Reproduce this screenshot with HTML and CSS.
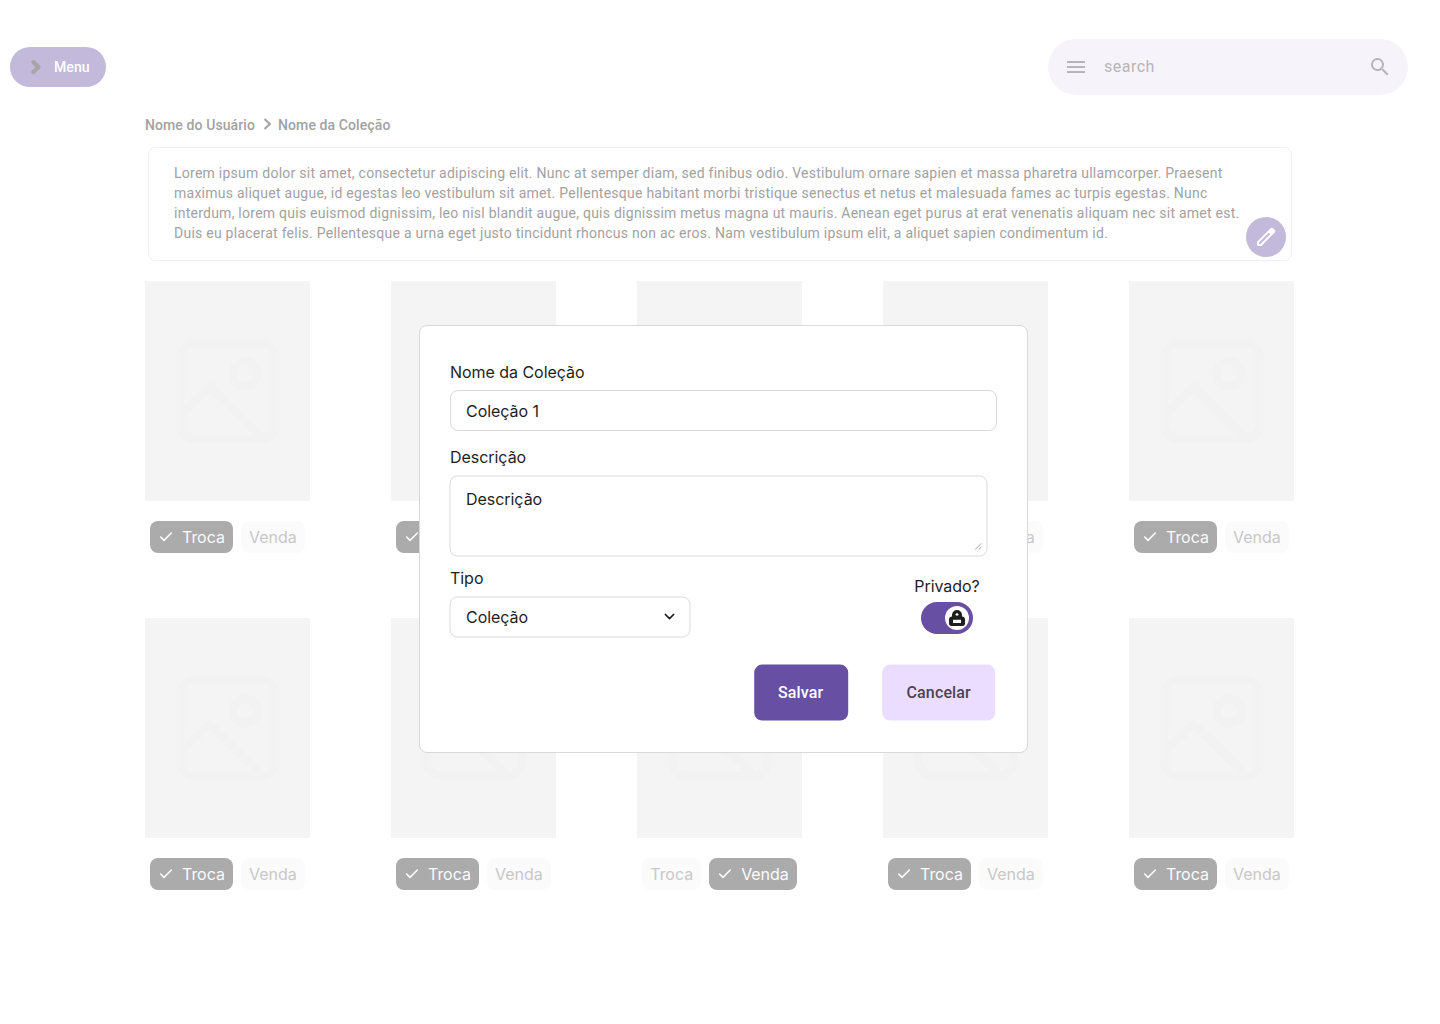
FILE: index.html
```html
<!DOCTYPE html>
<html lang="pt-BR">
<head>
<meta charset="utf-8">
<title>Coleção</title>
<link rel="stylesheet" href="styles.css">
</head>
<body>
<svg class="defs" width="0" height="0" aria-hidden="true">
  <symbol id="check" viewBox="0 0 16 16"><path d="M13.33 4 6 11.33 2.67 8" fill="none" stroke="currentColor" stroke-width="1.6" stroke-linecap="round" stroke-linejoin="round"/></symbol>
  <symbol id="image" viewBox="0 0 104 104"><g fill="none" stroke="#f2f2f2" stroke-width="8.5"><rect x="4.5" y="4.5" width="95" height="95" rx="14"/><circle cx="69" cy="35" r="12.5"/><path d="M5 75 34 48 84 97" stroke-linejoin="round"/></g></symbol>
</svg>
<header class="header">
  <button class="menu"><svg width="12" height="16" viewBox="0 0 12 16"><path d="M3.3 3 8.5 8 3.3 13" fill="none" stroke="#a5a5a5" stroke-width="4" stroke-linecap="round" stroke-linejoin="round"/></svg><span>Menu</span></button>
  <div class="search">
    <svg width="24" height="24" viewBox="0 0 24 24"><path d="M3 18h18v-2H3v2zm0-5h18v-2H3v2zm0-7v2h18V6H3z" fill="#b6b5ba"/></svg>
    <span class="search-text">search</span>
    <svg width="24" height="24" viewBox="0 0 24 24"><path d="M15.5 14h-.79l-.28-.27A6.47 6.47 0 0 0 16 9.5 6.5 6.5 0 1 0 9.5 16c1.61 0 3.09-.59 4.23-1.57l.27.28v.79l5 4.99L20.49 19l-4.99-5zm-6 0a4.5 4.5 0 1 1 0-9 4.5 4.5 0 0 1 0 9z" fill="#b6b5ba"/></svg>
  </div>
</header>
<main class="content">
  <nav class="crumbs"><span>Nome do Usuário</span><svg width="9" height="14" viewBox="0 0 9 14"><path d="M1.5 2 6.8 7 1.5 12" fill="none" stroke="#a5a5a5" stroke-width="2.2"/></svg><span>Nome da Coleção</span></nav>
  <section class="about">
    <p>Lorem ipsum dolor sit amet, consectetur adipiscing elit. Nunc at semper diam, sed finibus odio. Vestibulum ornare sapien et massa pharetra ullamcorper. Praesent<br>maximus aliquet augue, id egestas leo vestibulum sit amet. Pellentesque habitant morbi tristique senectus et netus et malesuada fames ac turpis egestas. Nunc<br>interdum, lorem quis euismod dignissim, leo nisl blandit augue, quis dignissim metus magna ut mauris. Aenean eget purus at erat venenatis aliquam nec sit amet est.<br>Duis eu placerat felis. Pellentesque a urna eget justo tincidunt rhoncus non ac eros. Nam vestibulum ipsum elit, a aliquet sapien condimentum id.</p>
    <button class="edit" aria-label="Editar"><svg width="24" height="24" viewBox="0 0 24 24"><path fill-rule="evenodd" d="M3 21v-4.3L16.3 3.4a2 2 0 0 1 2.9 0l1.4 1.4a2 2 0 0 1 0 2.9L7.3 21H3Zm2-2h1.4L16.2 9.2l-1.4-1.4L5 17.6V19Z" fill="#fff"/></svg></button>
  </section>
  <section class="grid">
    <article class="card"><div class="thumb"><svg><use href="#image"/></svg></div><div class="chips"><span class="chip on"><svg><use href="#check"/></svg>Troca</span><span class="chip">Venda</span></div></article>
    <article class="card"><div class="thumb"><svg><use href="#image"/></svg></div><div class="chips"><span class="chip on"><svg><use href="#check"/></svg>Troca</span><span class="chip">Venda</span></div></article>
    <article class="card"><div class="thumb"><svg><use href="#image"/></svg></div><div class="chips"><span class="chip on"><svg><use href="#check"/></svg>Troca</span><span class="chip">Venda</span></div></article>
    <article class="card"><div class="thumb"><svg><use href="#image"/></svg></div><div class="chips"><span class="chip on"><svg><use href="#check"/></svg>Troca</span><span class="chip">Venda</span></div></article>
    <article class="card"><div class="thumb"><svg><use href="#image"/></svg></div><div class="chips"><span class="chip on"><svg><use href="#check"/></svg>Troca</span><span class="chip">Venda</span></div></article>
    <article class="card"><div class="thumb"><svg><use href="#image"/></svg></div><div class="chips"><span class="chip on"><svg><use href="#check"/></svg>Troca</span><span class="chip">Venda</span></div></article>
    <article class="card"><div class="thumb"><svg><use href="#image"/></svg></div><div class="chips"><span class="chip on"><svg><use href="#check"/></svg>Troca</span><span class="chip">Venda</span></div></article>
    <article class="card"><div class="thumb"><svg><use href="#image"/></svg></div><div class="chips"><span class="chip">Troca</span><span class="chip on"><svg><use href="#check"/></svg>Venda</span></div></article>
    <article class="card"><div class="thumb"><svg><use href="#image"/></svg></div><div class="chips"><span class="chip on"><svg><use href="#check"/></svg>Troca</span><span class="chip">Venda</span></div></article>
    <article class="card"><div class="thumb"><svg><use href="#image"/></svg></div><div class="chips"><span class="chip on"><svg><use href="#check"/></svg>Troca</span><span class="chip">Venda</span></div></article>
  </section>
</main>
<form class="modal">
  <label class="label">Nome da Coleção</label>
  <div class="field name">Coleção 1</div>
  <label class="label desc-label">Descrição</label>
  <div class="field soft area">Descrição<svg class="grip" width="8" height="8" viewBox="0 0 8 8"><path d="M.5 7.2 6.8.8M4.2 7.2 6.8 4.6" fill="none" stroke="#a0a0a0"/></svg></div>
  <div class="row">
    <div class="type">
      <label class="label">Tipo</label>
      <div class="field soft select"><span>Coleção</span><svg width="16" height="16" viewBox="0 0 16 16"><path d="M3.8 5.9 8 10.1l4.2-4.2" fill="none" stroke="#1e1e1e" stroke-width="1.5" stroke-linecap="round" stroke-linejoin="round"/></svg></div>
    </div>
    <div class="private">
      <label class="label">Privado?</label>
      <div class="switch"><div class="knob"><svg width="16" height="16" viewBox="0 0 16 16"><path fill-rule="evenodd" d="M3 6.6V4.9A4.9 4.9 0 0 1 7.9 0h.2A4.9 4.9 0 0 1 13 4.9v1.7c1.8.2 3 1 3 2.8v4.1c0 1.6-.9 2.5-2.5 2.5h-11C.9 16 0 15.1 0 13.5V9.4c0-1.8 1.2-2.6 3-2.8ZM8 3.2c-.8 0-1.3.6-1.5 1.4-.1.7.4 1.2 1.5 1.2s1.6-.5 1.5-1.2C9.3 3.8 8.8 3.2 8 3.2ZM4 9.700v3.300h8V9.700H4Z" fill="#1e1e1e"/></svg></div></div>
    </div>
  </div>
  <div class="actions"><button type="button" class="btn primary">Salvar</button><button type="button" class="btn secondary">Cancelar</button></div>
</form>
</body>
</html>
```
FILE: styles.css
```css
* { box-sizing: border-box; }
body { margin: 0; width: 1440px; height: 1024px; overflow: hidden; position: relative; background: #fff; font-family: Inter, sans-serif; letter-spacing: -.04px; color: #1e1e1e; }
.defs { position: absolute; }
svg { display: block; flex: none; }
button { border: 0; margin: 0; font-family: Roboto, sans-serif; }
.header { display: flex; justify-content: space-between; align-items: center; height: 56px; margin: 39px 32px 0 10px; }
.menu { display: flex; align-items: center; gap: 12px; width: 96px; height: 40px; padding: 0 0 0 20px; border-radius: 20px; background: #c2b9db; color: #fff; font-size: 14px; font-weight: 500; letter-spacing: .1px; }
.search { display: flex; align-items: center; width: 360px; height: 56px; padding: 0 16px; border-radius: 28px; background: #f6f4fa; }
.search-text { flex: 1; margin-left: 16px; font: 400 16px/24px Roboto, sans-serif; letter-spacing: .5px; color: #b6b5ba; }
.content { margin: 20px 146px 0 145px; }
.crumbs { display: flex; align-items: center; height: 20px; font: 500 14px/20px Roboto, sans-serif; letter-spacing: .1px; color: #a2a2a2; }
.crumbs svg { margin: -3px 6px 0 8px; }
.about { position: relative; margin: 12px 2px 0 3px; height: 114px; padding: 15px 25px; border: 1px solid #f0f0f0; border-radius: 8px; }
.about p { margin: 0; white-space: nowrap; font: 400 14px/20px Roboto, sans-serif; letter-spacing: .25px; color: #a2a2a2; }
.edit { position: absolute; right: 5px; bottom: 3px; width: 40px; height: 40px; padding: 8px; border-radius: 50%; background: #c2b9db; }
.grid { display: grid; grid-template-columns: repeat(5, 165px); column-gap: 81px; row-gap: 65px; margin-top: 20px; }
.thumb { display: grid; place-items: center; height: 220px; background: #f4f4f4; }
.thumb svg { width: 104px; height: 104px; }
.chips { display: flex; justify-content: center; gap: 8px; margin: 20px -5px 0; }
.chip { display: flex; align-items: center; gap: 8px; height: 32px; padding: 0 8px; border-radius: 8px; background: #fbfbfb; color: #c8c8c8; font-size: 16px; line-height: 16px; }
.chip.on { background: #ababab; color: #fbfbfb; }
.chip.on:first-child { width: 83px; }
.chip.on + .chip { width: 64px; }
.chip svg { width: 16px; height: 16px; }
.modal { position: absolute; left: 419px; top: 325px; width: 609px; height: 428px; padding: 35px 30px 0; background: #fff; border: 1px solid #d9d9d9; border-radius: 8px; }
.label { display: block; font-size: 16px; line-height: 22px; }
.field { border: 1px solid #d9d9d9; border-radius: 8px; background: #fff; font-size: 16px; line-height: 22px; }
.soft { transform: translate(-.5px, .5px); }
.name { height: 41px; margin-top: 7px; padding: 9px 15px; }
.desc-label { margin-top: 15px; }
.area { position: relative; width: 538px; height: 81px; margin-top: 7px; padding: 11px 15.5px; }
.grip { position: absolute; right: 4px; bottom: 5px; }
.row { display: flex; justify-content: space-between; margin-top: 11px; }
.select { display: flex; align-items: center; justify-content: space-between; width: 241px; height: 41px; margin-top: 7px; padding: 0 12px 1px 15.5px; }
.private { display: flex; flex-direction: column; align-items: center; gap: 5px; width: 66px; margin: 8px 17px 0 0; white-space: nowrap; }
.switch { display: flex; justify-content: flex-end; width: 52px; height: 32px; padding: 4px; border-radius: 16px; background: #6750a4; }
.knob { display: grid; place-items: center; width: 24px; height: 24px; border-radius: 50%; background: #fff; }
.actions { display: flex; justify-content: flex-end; gap: 34px; margin: 28px 2px 0 0; }
.btn { height: 56px; padding: 0 24px 2px; border-radius: 8px; font-size: 16px; font-weight: 500; letter-spacing: .15px; transform: translate(.2px, -.4px); }
.primary { width: 94px; padding: 0 24px 2px 23px; background: #6750a4; color: #fff; }
.secondary { width: 113px; background: #eaddff; color: #4a4458; }
```
